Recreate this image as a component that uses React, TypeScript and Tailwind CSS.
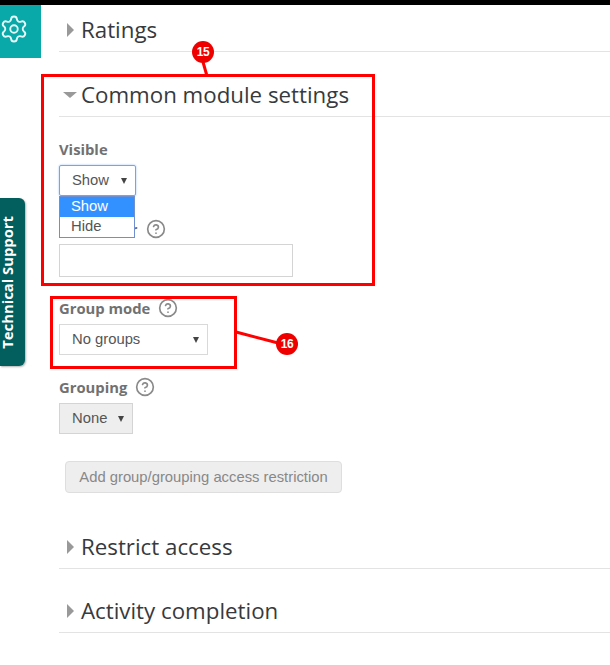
import { CircleHelp, Settings } from 'lucide-react';

function Help() {
  return <CircleHelp className="w-[20px] h-[20px] text-[#8a8a8a]" strokeWidth={2} />;
}

function Section({ title, open = false, className = '' }: { title: string; open?: boolean; className?: string }) {
  return (
    <div className={`flex items-center h-[46px] pt-[4px] border-b border-[#e3e3e3] ${className}`}>
      <div className="w-[22px] flex justify-center -mt-[1px]">
        {open ? (
          <div className="w-0 h-0 border-x-[7px] border-x-transparent border-t-[6px] border-t-[#999]" />
        ) : (
          <div className="w-0 h-0 border-y-[7px] border-y-transparent border-l-[7px] border-l-[#999]" />
        )}
      </div>
      <h3 className="text-[22.3px] leading-none text-[#373a3c] font-['Open_Sans',sans-serif]">{title}</h3>
    </div>
  );
}

function Label({ text, help = true, className = '' }: { text: string; help?: boolean; className?: string }) {
  return (
    <div className={`flex items-center gap-[8px] h-[20px] text-[14.8px] font-bold text-[#717171] font-['Open_Sans',sans-serif] ${className}`}>
      <span>{text}</span>
      {help && <Help />}
    </div>
  );
}

function Select({ value, className }: { value: string; className: string }) {
  return (
    <div className={`flex items-center justify-between pl-[12px] pr-[8px] border text-[14.8px] text-[#555] font-['Liberation_Sans',sans-serif] ${className}`}>
      <span>{value}</span>
      <span className="w-0 h-0 border-x-[3.5px] border-x-transparent border-t-[6px] border-t-[#444]" />
    </div>
  );
}

export default function App() {
  return (
    <div className="relative w-[610px] h-[665px] overflow-hidden bg-white">
      <div className="h-[5px] bg-black" />
      <div className="flex">
        {/* left rail */}
        <div className="w-[59px] shrink-0">
          <div className="w-[41px] h-[53px] bg-[#0aa9a9] pt-[9px]">
            <Settings className="w-[30px] h-[30px] -ml-[1px] text-[#e6f8f8]" strokeWidth={1.5} />
          </div>
          <div className="mt-[140px] w-[25px] h-[168px] bg-[#035e5e] rounded-r-[6px] shadow-[1px_1px_2px_rgba(0,0,0,0.3)] flex items-center justify-center pr-[11px]">
            <span className="[writing-mode:vertical-rl] rotate-180 text-[14.8px] leading-[14px] font-bold text-white whitespace-nowrap font-['Open_Sans',sans-serif]">
              Technical Support
            </span>
          </div>
        </div>

        {/* form */}
        <div className="flex-1 min-w-0">
          <Section title="Ratings" className="h-[47px]" />
          <Section title="Common module settings" open className="mt-[19px]" />

          <Label text="Visible" help={false} className="mt-[22px]" />
          <Select value="Show" className="mt-[6px] w-[77px] h-[31px] rounded-[2px] border-[#6ea6f5] shadow-[0_0_2px_#8fbcf7]" />

          <Label text="ID number" className="mt-[23px]" />
          <div className="mt-[5px] w-[234px] h-[33px] border border-[#d4d4d4]" />

          <Label text="Group mode" className="mt-[21px]" />
          <Select value="No groups" className="mt-[6px] w-[149px] h-[31px] border-[#d9d9d9]" />

          <Label text="Grouping" className="mt-[22px]" />
          <Select value="None" className="mt-[6px] w-[74px] h-[31px] bg-[#eeeeee] border-[#d4d4d4]" />

          <button className="block mt-[27px] ml-[6px] w-[277px] h-[32px] rounded-[4px] bg-[#eeeeee] border border-[#dedede] text-[14.8px] text-[#888] font-['Liberation_Sans',sans-serif]">
            Add group/grouping access restriction
          </button>

          <Section title="Restrict access" className="mt-[30px] h-[45px]" />
          <Section title="Activity completion" className="mt-[18px]" />
        </div>
      </div>

      {/* open dropdown list */}
      <div className="absolute left-[59px] top-[196px] w-[76px] h-[42px] bg-white border border-[#6f8fd0] text-[14.8px] leading-[19px] text-[#555] font-['Liberation_Sans',sans-serif]">
        <div className="h-[20px] pl-[11px] bg-[#3391ff] text-white">Show</div>
        <div className="h-[20px] pl-[11px]">Hide</div>
      </div>

      {/* annotations */}
      <div className="absolute left-[41px] top-[74px] w-[334px] h-[212px] border-[3px] border-[#ff0000]" />
      <div className="absolute left-[50px] top-[296px] w-[187px] h-[73px] border-[3px] border-[#ff0000]" />
      <svg className="absolute left-0 top-0 pointer-events-none" width="610" height="665">
        <line x1="203" y1="62" x2="207" y2="76" stroke="#ff0000" strokeWidth="3" />
        <line x1="236" y1="332" x2="282" y2="344" stroke="#ff0000" strokeWidth="3" />
      </svg>
      <div className="absolute left-[192px] top-[41px] w-[22px] h-[22px] rounded-full bg-[#ee0000] text-white text-[12px] tracking-tight font-bold flex items-center justify-center font-['Liberation_Sans',sans-serif]">15</div>
      <div className="absolute left-[276px] top-[333px] w-[22px] h-[22px] rounded-full bg-[#ee0000] text-white text-[12px] tracking-tight font-bold flex items-center justify-center font-['Liberation_Sans',sans-serif]">16</div>
    </div>
  );
}
